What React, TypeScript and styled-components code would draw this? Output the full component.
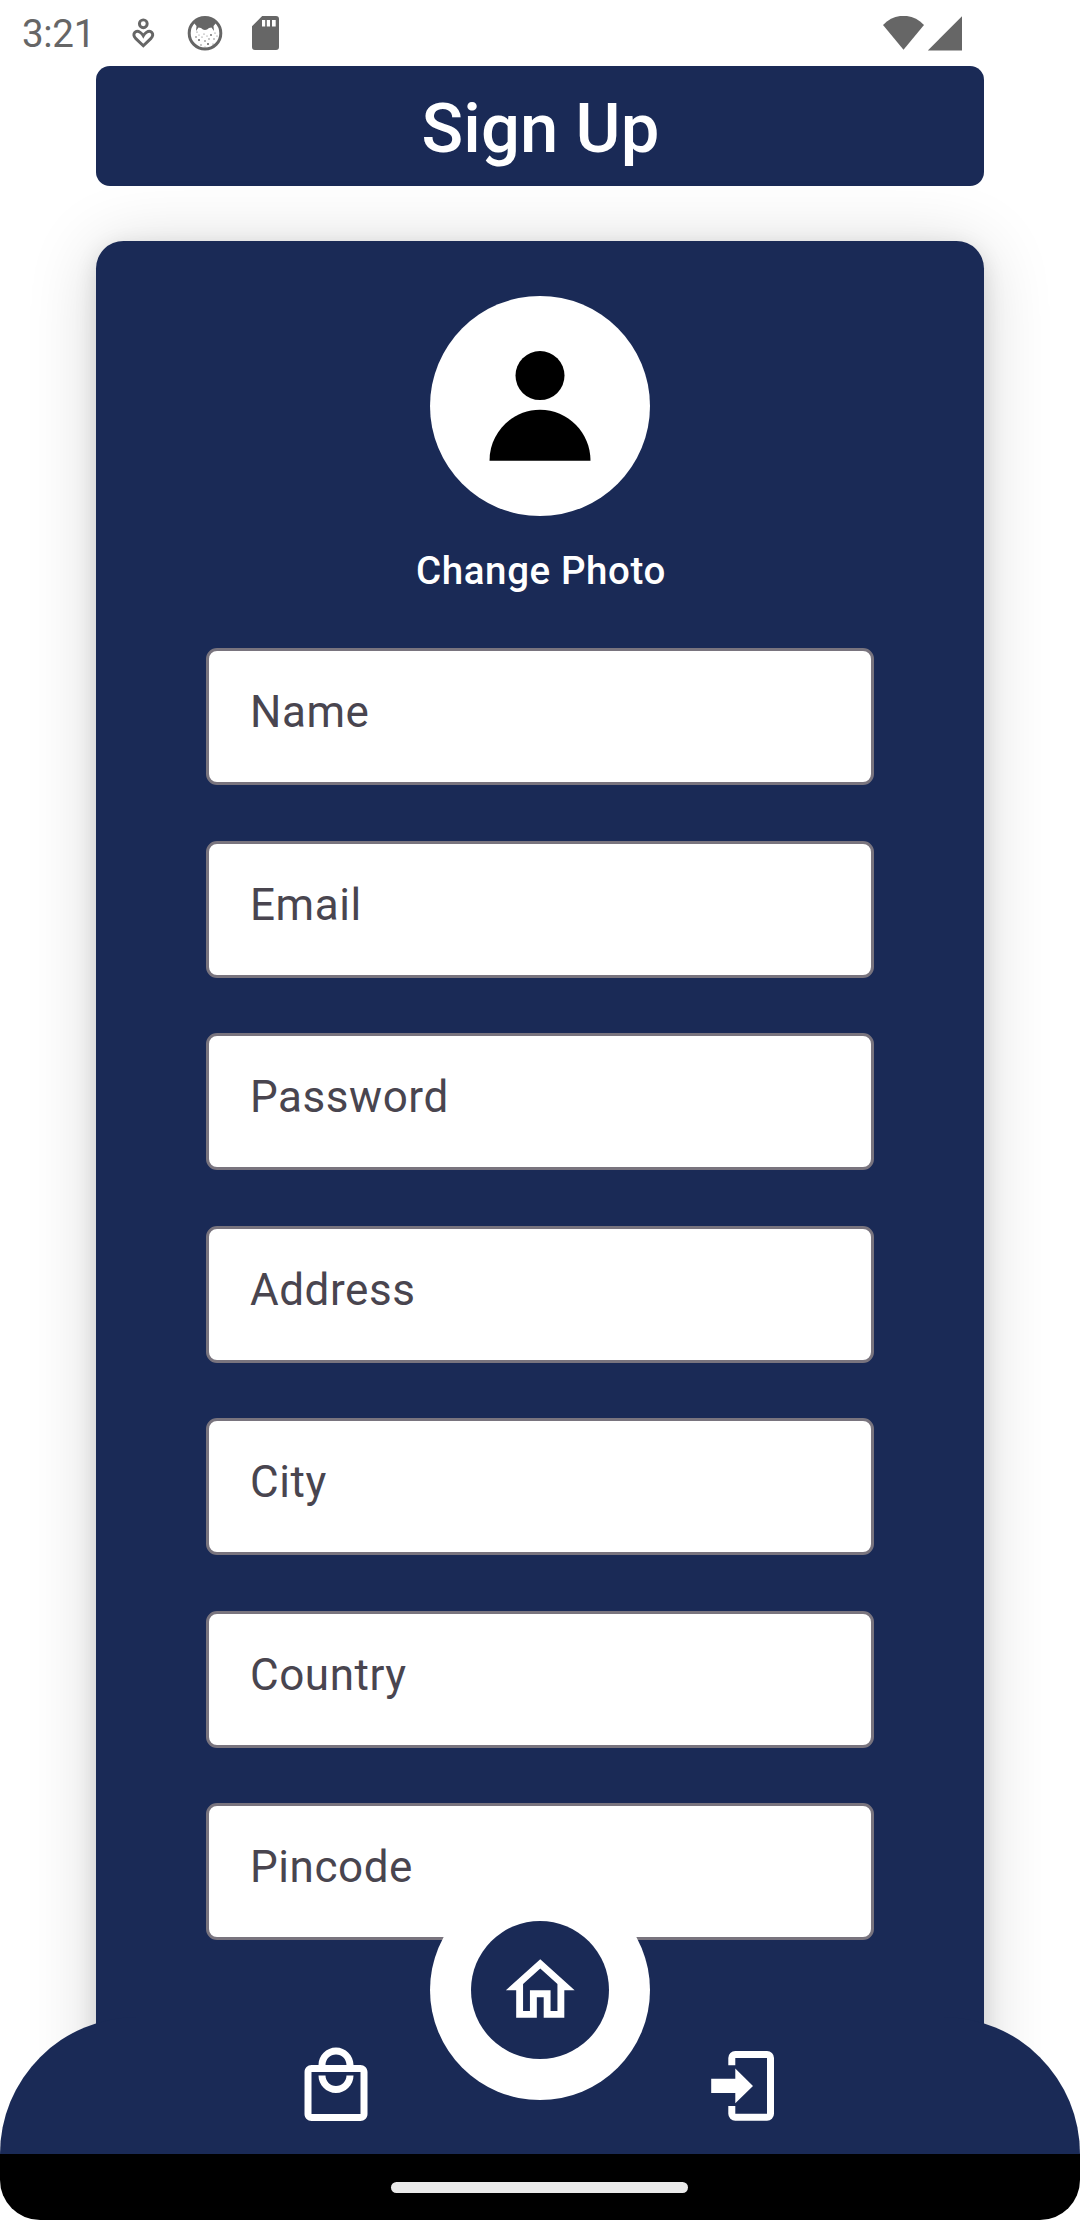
import React from "react";
import styled, { createGlobalStyle } from "styled-components";

const NAVY = "#1a2a56";
const STATUS = "#666666";

const GlobalStyle = createGlobalStyle`
  * { box-sizing: border-box; }
  body { margin: 0; background: #fff; font-family: Roboto, "Liberation Sans", sans-serif; }
  button { font: inherit; border: 0; padding: 0; background: none; color: inherit; }
  svg { display: block; flex: none; }
`;

const Screen = styled.div`
  position: relative;
  width: 1080px;
  height: 2220px;
  overflow: hidden;
  background: #fff;
  display: flex;
  flex-direction: column;
`;

const StatusBar = styled.header`
  height: 66px;
  flex: none;
  display: flex;
  justify-content: space-between;
  padding: 0 118px 0 22px;
  color: ${STATUS};
`;

const StatusGroup = styled.div<{ $gap: number }>`
  display: flex;
  align-items: center;
  height: 66px;
  gap: ${(p) => p.$gap}px;
`;

const Clock = styled.span`
  font-size: 38.5px;
  line-height: 66px;
  letter-spacing: -0.3px;
  width: 101px;
  height: 66px;
  padding-top: 1px;
`;

const Main = styled.main`
  display: flex;
  flex-direction: column;
  align-items: center;
  gap: 55px;
`;

const Title = styled.h1`
  margin: 0;
  width: 888px;
  height: 120px;
  border-radius: 14px;
  background: ${NAVY};
  color: #fff;
  font-size: 68.75px;
  font-weight: 500;
  line-height: 125px;
  padding-left: 1px;
  letter-spacing: 0.1px;
  text-align: center;
`;

const Card = styled.form`
  width: 888px;
  height: 2000px;
  border-radius: 27.5px;
  background: ${NAVY};
  box-shadow: 0 6px 22px rgba(0, 0, 0, 0.12), 0 6px 70px rgba(0, 0, 0, 0.16);
  display: flex;
  flex-direction: column;
  align-items: center;
  padding-top: 55px;
`;

const Avatar = styled.div`
  width: 220px;
  height: 220px;
  border-radius: 50%;
  background: #fff;
`;

const PhotoButton = styled.button`
  && {
    height: 132px;
    padding: 0 0 23px 2px;
    color: #fff;
    font-size: 38.5px;
    font-weight: 500;
    letter-spacing: 0.6px;
  }
`;

const Fields = styled.div`
  display: flex;
  flex-direction: column;
  gap: 55.5px;
`;

const Field = styled.label`
  width: 668px;
  height: 137px;
  border: 3px solid #79747e;
  border-radius: 11px;
  background: #fff;
  color: #49454f;
  font-size: 44px;
  line-height: 52px;
  letter-spacing: 0.55px;
  padding: 35px 41px;
`;

const BottomBar = styled.nav`
  position: absolute;
  left: 0;
  right: 0;
  bottom: 66px;
  height: 137.5px;
  border-radius: 137.5px 137.5px 0 0;
  background: ${NAVY};
  color: #fff;
  display: flex;
  justify-content: space-between;
  padding: 27.5px 294px 0;
`;

const NavButton = styled.button`
  width: 84px;
  height: 84px;
`;

const HomeRing = styled.div`
  position: absolute;
  left: 430px;
  top: 1880px;
  width: 220px;
  height: 220px;
  border-radius: 50%;
  background: #fff;
  display: grid;
  place-items: center;
`;

const HomeButton = styled.button`
  && {
    width: 138px;
    height: 138px;
    border-radius: 50%;
    background: ${NAVY};
    color: #fff;
    display: grid;
    place-items: center;
  }
`;

const SystemBar = styled.footer`
  position: absolute;
  left: 0;
  right: 0;
  bottom: 0;
  height: 66px;
  background: #000;
  border-radius: 0 0 40px 40px;
  display: flex;
  justify-content: center;
  align-items: center;
`;

const Handle = styled.div`
  width: 297px;
  height: 11px;
  margin-right: 1px;
  border-radius: 6px;
  background: #eaeaea;
`;

const HeartPerson = () => (
  <svg width="40" height="40" viewBox="0 0 40 40" fill="none" stroke="currentColor" strokeWidth="2.9">
    <circle cx="20.3" cy="10.8" r="3.9" />
    <path d="M20.3 32.8 L12.6 25.4 C8.6 20.8 12.8 16.4 17.2 19.4 C18.6 20.4 19.6 21.6 20.3 22.8 C21 21.6 22 20.4 23.4 19.4 C27.8 16.4 32 20.8 28 25.4 Z" />
  </svg>
);

const speckles: [number, number, number][] = [
  [9, 22, 0.8], [12, 25, 1], [15, 22, 0.6], [18, 26, 0.8], [22, 24, 0.7], [24, 20, 0.9],
  [27, 24, 0.7], [28, 18, 0.6], [21, 29, 1], [26, 29, 0.6], [14, 30, 0.7], [17, 19, 0.6],
  [10, 17, 0.6], [30, 21, 0.6], [18, 32, 0.5], [23, 33, 0.5], [12, 20, 0.5], [20, 21, 0.5],
];

const Face = () => (
  <svg width="36" height="36" viewBox="0 0 36 36" fill="currentColor">
    <circle cx="18" cy="18.2" r="15.8" fill="none" stroke="currentColor" strokeWidth="3" />
    <path d="M6.5 7.5 C12 0 24 0 29.5 7.5 L26.5 11 L27 16 L24.5 12.5 L22 13 C19.5 15.5 16.5 15.5 14 13 L11.5 12.5 L9 16 L9.5 11 Z" />
    {speckles.map(([x, y, r]) => (
      <circle key={`${x}-${y}`} cx={x} cy={y} r={r} />
    ))}
  </svg>
);

const SdCardIcon = styled.svg`
  margin-left: 6px;
`;

const SdCard = () => (
  <SdCardIcon width="27" height="34" viewBox="0 0 27 34" fill="currentColor">
    <path
      fillRule="evenodd"
      d="M10.2 0H24a3 3 0 0 1 3 3V31a3 3 0 0 1-3 3H3a3 3 0 0 1-3-3V10.2ZM10 4V10.5H13.2V4ZM14.8 4V10.5H18V4ZM20 4V10.5H23.7V4Z"
    />
  </SdCardIcon>
);

const Signal = () => (
  <svg width="79" height="35" viewBox="0 0 79 35" fill="currentColor">
    <path d="M0 9 C11.5 -3.3 29.5 -3.3 41 9 L20.5 33.8 Z" />
    <path d="M44.8 34.4 L79 0.2 V34.4 Z" />
  </svg>
);

const Person = () => (
  <svg width="220" height="220" viewBox="0 0 220 220">
    <circle cx="110" cy="79.6" r="24.5" />
    <path d="M59.5 164.7 C59.5 136.5 82 113.7 110 113.7 C138 113.7 160.5 136.5 160.5 164.7 Z" />
  </svg>
);

const Home = () => (
  <svg width="82.5" height="82.5" viewBox="0 0 24 24" fill="currentColor">
    <path d="M12 5.69l5 4.5V18h-2v-6H9v6H7v-7.81l5-4.5M12 3L2 12h3v8h6v-6h2v6h6v-8h3L12 3z" />
  </svg>
);

const Bag = () => (
  <svg width="84" height="84" viewBox="0 0 24 24" fill="currentColor">
    <path d="M19 6h-2c0-2.76-2.24-5-5-5S7 3.24 7 6H5c-1.1 0-1.99.9-1.99 2L3 20c0 1.1.9 2 2 2h14c1.1 0 2-.9 2-2V8c0-1.1-.9-2-2-2zm-7-3c1.66 0 3 1.34 3 3H9c0-1.66 1.34-3 3-3zm7 17H5V8h14v12zm-7-8c-1.66 0-3-1.34-3-3H7c0 2.76 2.24 5 5 5s5-2.24 5-5h-2c0 1.66-1.34 3-3 3z" />
  </svg>
);

const Login = () => (
  <svg width="84" height="84" viewBox="0 0 84 84" fill="currentColor">
    <path d="M26.3 21.3V14a7 7 0 0 1 7-7H65a7 7 0 0 1 7 7V69.7a7 7 0 0 1-7 7H33.3a7 7 0 0 1-7-7V62H33.3V69.7H65V14H33.3V21.3Z" />
    <path d="M9.2 34.7H33.3V24.5L51 42L33.3 59.2V49H9.2Z" />
  </svg>
);

const fieldNames = ["Name", "Email", "Password", "Address", "City", "Country", "Pincode"];

export default function App() {
  return (
    <Screen>
      <GlobalStyle />
      <StatusBar>
        <StatusGroup $gap={0}>
          <Clock>3:21</Clock>
          <StatusGroup $gap={23.5}>
            <HeartPerson />
            <Face />
            <SdCard />
          </StatusGroup>
        </StatusGroup>
        <StatusGroup $gap={0}>
          <Signal />
        </StatusGroup>
      </StatusBar>
      <Main>
        <Title>Sign Up</Title>
        <Card>
          <Avatar>
            <Person />
          </Avatar>
          <PhotoButton type="button">Change Photo</PhotoButton>
          <Fields>
            {fieldNames.map((name) => (
              <Field key={name}>{name}</Field>
            ))}
          </Fields>
        </Card>
      </Main>
      <BottomBar>
        <NavButton aria-label="Shop">
          <Bag />
        </NavButton>
        <NavButton aria-label="Log in">
          <Login />
        </NavButton>
      </BottomBar>
      <HomeRing>
        <HomeButton aria-label="Home">
          <Home />
        </HomeButton>
      </HomeRing>
      <SystemBar>
        <Handle />
      </SystemBar>
    </Screen>
  );
}
